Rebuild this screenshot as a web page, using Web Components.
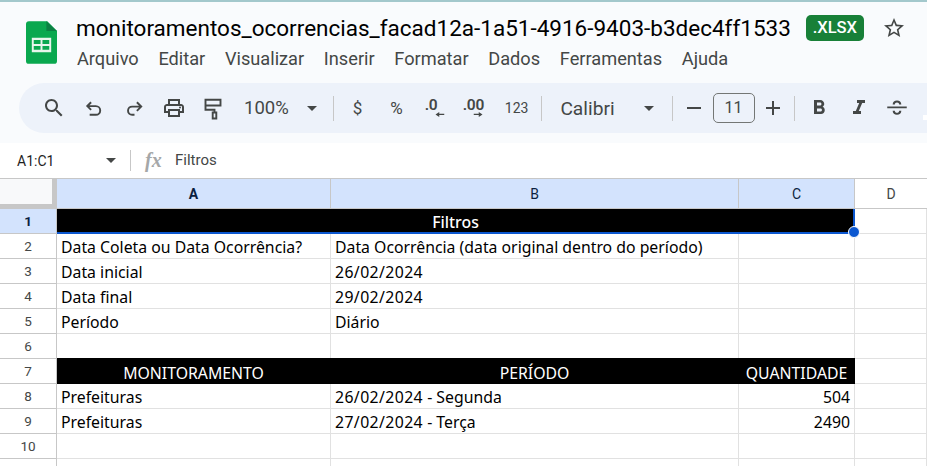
<!DOCTYPE html>
<html>
<head>
<meta charset="utf-8">
<style>
  html, body { margin: 0; padding: 0; height: 466px; overflow: hidden; background: #f9fbfd; }
  body { font-family: Roboto, sans-serif; }
</style>
</head>
<body>
<doc-header title-text="monitoramentos_ocorrencias_facad12a-1a51-4916-9403-b3dec4ff1533"></doc-header>
<tool-bar></tool-bar>
<formula-bar ref="A1:C1">Filtros</formula-bar>
<sheet-grid></sheet-grid>

<script>
const ICONS = {
	search: '<path fill="currentColor" d="M15.5 14h-.79l-.28-.27C15.41 12.59 16 11.11 16 9.5 16 5.91 13.09 3 9.5 3S3 5.91 3 9.5 5.91 16 9.5 16c1.61 0 3.09-.59 4.23-1.57l.27.28v.79l5 4.99L20.49 19l-4.99-5zm-6 0C7.01 14 5 11.99 5 9.5S7.01 5 9.5 5 14 7.01 14 9.5 11.99 14 9.5 14z"/>',
	undo: '<path fill="none" stroke="currentColor" stroke-width="2" d="M9.5 13.5 5.500 9.500l4-4M5.500 9.500h9a4.500 4.500 0 0 1 0 9H8"/>',
	redo: '<path fill="none" stroke="currentColor" stroke-width="2" d="M14.5 14.5 19 10l-4.5-4.5M19 10H9.5a4.25 4.25 0 0 0 0 8.500H12"/>',
	print: '<path fill="currentColor" d="M19 8h-1V3H6v5H5c-1.66 0-3 1.34-3 3v6h4v4h12v-4h4v-6c0-1.66-1.34-3-3-3zM8 5h8v3H8V5zm8 12v2H8v-4h8v2zm2-2v-2H6v2H4v-4c0-.55.45-1 1-1h14c.55 0 1 .45 1 1v4h-2z"/><circle fill="currentColor" cx="18" cy="11.5" r="1"/>',
	paint: '<path fill="none" stroke="currentColor" stroke-width="1.9" d="M4.5 3.8h15v5.7h-15zM4.5 9.5v4.2h9v2.800M11.700 16.500h3.600v6h-3.600z"/>',
	minus: '<path fill="currentColor" d="M5 11h14v2H5z"/>',
	plus: '<path fill="currentColor" d="M19 13h-6v6h-2v-6H5v-2h6V5h2v6h6z"/>',
	bold: '<path fill="currentColor" d="M15.6 10.79c.97-.67 1.65-1.77 1.65-2.79 0-2.26-1.75-4-4-4H7v14h7.04c2.09 0 3.71-1.7 3.71-3.79 0-1.52-.86-2.82-2.15-3.42zM10 6.500h3c.83 0 1.500.67 1.500 1.500s-.67 1.500-1.500 1.500h-3v-3zm3.500 9H10v-3h3.500c.83 0 1.500.67 1.500 1.500s-.67 1.500-1.500 1.500z"/>',
	italic: '<path fill="currentColor" d="M10 4v3h2.21l-3.42 8H6v3h8v-3h-2.21l3.42-8H18V4z"/>',
	strike: '<path fill="currentColor" d="M3 10.500h18v1.800H3zM8 8.800C8 6.300 9.700 5 12 5s4 1.300 4 3.800h-2c0-1.200-.8-1.900-2-1.900s-2 .7-2 1.900zM16 14.500c0 2.500-1.700 3.800-4 3.800s-4-1.300-4-3.800h2c0 1.200.8 1.900 2 1.900s2-.7 2-1.900z"/>',
	star: '<path fill="currentColor" d="M22 9.24l-7.19-.62L12 2 9.19 8.63 2 9.24l5.46 4.73L5.82 21 12 17.27 18.18 21l-1.63-7.03L22 9.24zM12 15.4l-3.76 2.27 1-4.28-3.32-2.88 4.38-.38L12 6.1l1.71 4.04 4.38.38-3.32 2.88 1 4.28L12 15.4z"/>',
	arrowL: '<path fill="currentColor" d="M10 3 4 7l6 4V8h8V6h-8z"/>',
	arrowR: '<path fill="currentColor" d="M14 3l6 4-6 4V8H6V6h8z"/>'
};

class TbIcon extends HTMLElement {
	constructor() {
		super();
		this.attachShadow({ mode: 'open' });
		const size = this.getAttribute('size') || 24;
		this.shadowRoot.innerHTML = `
			<style>
				:host { display: inline-flex; align-items: center; justify-content: center; color: #444746; flex: none; }
				svg { display: block; width: ${size}px; height: ${size}px; }
			</style>
			<svg viewBox="0 0 24 24">${ICONS[this.getAttribute('name')]}</svg>
		`;
	}
}
customElements.define('tb-icon', TbIcon);

class DocHeader extends HTMLElement {
	constructor() {
		super();
		this.attachShadow({ mode: 'open' });
		const menus = ['Arquivo', 'Editar', 'Visualizar', 'Inserir', 'Formatar', 'Dados', 'Ferramentas', 'Ajuda'];
		this.shadowRoot.innerHTML = `
			<style>
				:host { display: flex; height: 81px; border-top: 2px solid #a3c8cc; padding-left: 26px; color: #1f1f1f; }
				.logo { width: 31px; height: 43px; margin-top: 19px; flex: none; }
				.text { margin-left: 19px; }
				.title-row { display: flex; align-items: center; height: 28px; margin-top: 12px; }
				.title { font-size: 22.5px; line-height: 28px; color: #000; white-space: nowrap; }
				.badge { margin-left: 15px; background: #188038; color: #fff; font-size: 16.5px; font-weight: 500; border-radius: 5px; width: 58px; height: 26px; line-height: 26px; text-align: center; flex: none; }
				.star { margin-left: 18px; color: #444746; }
				nav { display: flex; gap: 19.7px; margin-top: 5px; font-size: 18.2px; line-height: 24px; color: #444746; margin-left: 1px; }
			</style>
			<svg class="logo" viewBox="0 0 32 44">
				<path fill="#0aa84f" d="M3 0h19l10 10v31a3 3 0 0 1-3 3H3a3 3 0 0 1-3-3V3a3 3 0 0 1 3-3z" />
				<path fill="#0b8043" d="M21 0l11 10H21z"/>
				<path fill="#e8f5ec" fill-rule="evenodd" d="M6 17h20v15H6zM8 19.500v4h7v-4zm9 0v4h7v-4zM8 25.500v4h7v-4zm9 0v4h7v-4z"/>
			</svg>
			<div class="text">
				<div class="title-row">
					<div class="title">${this.getAttribute('title-text')}</div>
					<div class="badge">.XLSX</div>
					<tb-icon class="star" name="star"></tb-icon>
				</div>
				<nav>${menus.map((m) => `<span>${m}</span>`).join('')}</nav>
			</div>
		`;
	}
}
customElements.define('doc-header', DocHeader);

class ToolBar extends HTMLElement {
	constructor() {
		super();
		this.attachShadow({ mode: 'open' });
		this.shadowRoot.innerHTML = `
			<style>
				:host { display: flex; align-items: center; height: 50px; margin-left: 19px; padding-left: 23px; width: 1000px; background: #edf2fa; border-radius: 25px; color: #444746; font-size: 17px; white-space: nowrap; }
				span { flex: none; }
				.sep { width: 1px; height: 25px; background: #c7c7c7; }
				.caret { width: 0; height: 0; border: 5.5px solid transparent; border-top-color: #444746; border-bottom: 0; }
				.dec { position: relative; display: block; width: 24px; height: 30px; font-size: 15.5px; font-weight: 600; line-height: 24px; letter-spacing: -.3px; }
				.dec tb-icon { position: absolute; top: 17px; }
				.size { width: 42px; height: 30px; box-sizing: border-box; border: 1px solid #747775; border-radius: 5px; text-align: center; line-height: 28px; font-size: 16px; }
				.patch { width: 4px; height: 5px; background: #fff; margin-top: 18px; }
			</style>
			<tb-icon name="search" size="24"></tb-icon>
			<tb-icon name="undo" size="23" style="margin-left:16px"></tb-icon>
			<tb-icon name="redo" size="23" style="margin-left:18px"></tb-icon>
			<tb-icon name="print" size="24" style="margin-left:16px"></tb-icon>
			<tb-icon name="paint" size="24" style="margin-left:15px"></tb-icon>
			<span style="margin-left:19px;font-size:18.5px">100%</span>
			<span class="caret" style="margin-left:18px"></span>
			<span class="sep" style="margin-left:16px"></span>
			<span style="margin-left:19px">$</span>
			<span style="margin-left:28px">%</span>
			<span class="dec" style="margin-left:22px">.0<tb-icon name="arrowL" size="15" style="left:8.5px"></tb-icon></span>
			<span class="dec" style="margin-left:14px">.00<tb-icon name="arrowR" size="15" style="left:7px"></tb-icon></span>
			<span style="margin-left:18px;font-size:14px">123</span>
			<span class="sep" style="margin-left:13px"></span>
			<span style="margin-left:18px;font-size:19.2px">Calibri</span>
			<span class="caret" style="margin-left:29px"></span>
			<span class="sep" style="margin-left:18px"></span>
			<tb-icon name="minus" size="24" style="margin-left:9px"></tb-icon>
			<span class="size" style="margin-left:7px">11</span>
			<tb-icon name="plus" size="24" style="margin-left:6px"></tb-icon>
			<span class="sep" style="margin-left:9px"></span>
			<tb-icon name="bold" size="24" style="margin-left:12px"></tb-icon>
			<tb-icon name="italic" size="24" style="margin-left:16px"></tb-icon>
			<tb-icon name="strike" size="26" style="margin-left:13px"></tb-icon>
			<span class="patch" style="margin-left:13px"></span>
		`;
	}
}
customElements.define('tool-bar', ToolBar);

class FormulaBar extends HTMLElement {
	constructor() {
		super();
		this.attachShadow({ mode: 'open' });
		this.shadowRoot.innerHTML = `
			<style>
				:host { display: flex; align-items: center; height: 35px; margin-top: 10px; background: #fff; color: #444746; font-size: 15px; padding-left: 17px; }
				.ref { width: 89px; color: #1f1f1f; font-size: 14px; }
				.caret { width: 0; height: 0; border: 5.5px solid transparent; border-top-color: #444746; border-bottom: 0; }
				.sep { width: 1px; height: 21px; background: #c7c7c7; margin-left: 14px; }
				.fx { margin-left: 14px; width: 20px; font: italic 700 20px "Liberation Serif", serif; color: #a5a7a8; }
				.value { margin-left: 10px; padding-bottom: 2px; }
			</style>
			<span class="ref">${this.getAttribute('ref')}</span>
			<span class="caret"></span>
			<span class="sep"></span>
			<span class="fx">fx</span>
			<span class="value"><slot></slot></span>
		`;
	}
}
customElements.define('formula-bar', FormulaBar);

class SheetGrid extends HTMLElement {
	constructor() {
		super();
		this.attachShadow({ mode: 'open' });
		const rows = [
			{ span: 'Filtros' },
			['Data Coleta ou Data Ocorrência?', 'Data Ocorrência (data original dentro do período)', ''],
			['Data inicial', '26/02/2024', ''],
			['Data final', '29/02/2024', ''],
			['Período', 'Diário', ''],
			['', '', ''],
			{ cells: ['MONITORAMENTO', 'PERÍODO', 'QUANTIDADE'] },
			['Prefeituras', '26/02/2024 - Segunda', '504'],
			['Prefeituras', '27/02/2024 - Terça', '2490'],
			['', '', ''],
			['', '', '']
		];
		// as datas ficam um pouco mais largas que na fonte substituta
		const withDate = (t) => t.replace(/\d\d\/\d\d\/\d{4}/, '<span class="date">$&</span>');
		let html = `<div class="corner"></div>`;
		['A', 'B', 'C', 'D'].forEach((c) => {
			html += `<div class="colhead ${c === 'D' ? '' : 'sel'} ${c === 'A' ? 'bold' : ''}">${c}</div>`;
		});
		rows.forEach((row, i) => {
			html += `<div class="rowhead ${i === 0 ? 'sel bold' : ''}">${i + 1}</div>`;
			if (row.span) {
				html += `<div class="cell black center span3 title">${row.span}</div><div class="cell"></div>`;
			} else if (row.cells) {
				row.cells.forEach((t) => { html += `<div class="cell black center up">${t}</div>`; });
				html += `<div class="cell"></div>`;
			} else {
				row.forEach((t, j) => {
					const num = j === 2 && t !== '';
					html += `<div class="cell ${num ? 'right' : ''}">${withDate(t)}</div>`;
				});
				html += `<div class="cell"></div>`;
			}
		});
		this.shadowRoot.innerHTML = `
			<style>
				:host { display: block; position: relative; height: 288px; overflow: hidden; background: #fff; border-top: 1px solid #c7c7c7; }
				.grid { display: grid; grid-template-columns: 57px 274px 408px 116px 72px; grid-template-rows: 30px repeat(11, 25px); }
				.corner { background: #f8f9fa; border-right: 5px solid #c7c7c7; border-bottom: 5px solid #c7c7c7; box-sizing: border-box; }
				.colhead, .rowhead { display: flex; align-items: center; justify-content: center; box-sizing: border-box; border-right: 1px solid #c7c7c7; border-bottom: 1px solid #c7c7c7; font: 14px Roboto, sans-serif; color: #444746; }
				.colhead { padding-top: 1px; }
				.rowhead { font-size: 13.5px; background: #fff; }
				.sel { background: #d3e3fd; color: #0b1f3f; }
				.bold { font-weight: 700; }
				.colhead:nth-child(5) { border-right: 0; }
				.cell { box-sizing: border-box; border-right: 1px solid #e1e1e1; border-bottom: 1px solid #e1e1e1; padding: 0 4px; font: 15.8px/26px "Noto Sans", sans-serif; color: #000; white-space: nowrap; overflow: hidden; }
				.date { letter-spacing: .4px; }
				.black { background: #000; color: #fff; border-color: #000; }
				.title { font-weight: 500; }
				.up { margin-top: -1px; line-height: 30px; }
				.center { text-align: center; }
				.right { text-align: right; }
				.span3 { grid-column: span 3; }
				.select { position: absolute; left: 57px; top: 30px; width: 798px; height: 25px; box-sizing: border-box; border: 2px solid #0b57d0; border-top: 0; border-left: 0; pointer-events: none; }
				.handle { position: absolute; right: -7px; bottom: -6px; width: 10px; height: 10px; border-radius: 50%; background: #0b57d0; border: 1px solid #fff; }
			</style>
			<div class="grid">${html}</div>
			<div class="select"><div class="handle"></div></div>
		`;
	}
}
customElements.define('sheet-grid', SheetGrid);
</script>
</body>
</html>
